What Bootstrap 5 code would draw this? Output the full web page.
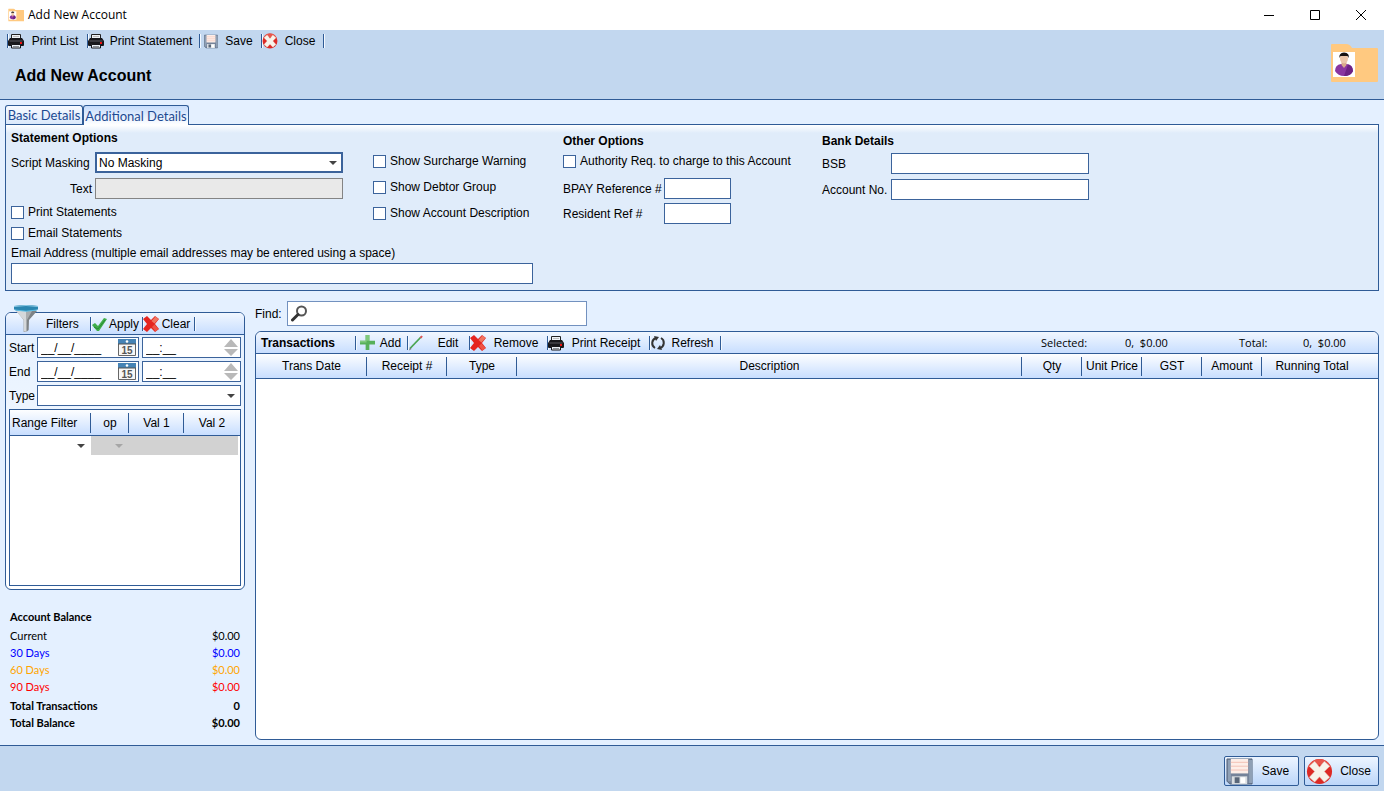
<!DOCTYPE html>
<html lang="en">
<head>
<meta charset="utf-8">
<meta name="viewport" content="width=device-width, initial-scale=1">
<title>Add New Account</title>
<link rel="stylesheet" href="https://cdn.jsdelivr.net/npm/bootstrap@5.3.0/dist/css/bootstrap.min.css">
<style>
  :root { --line: #2f5b96; --band: #c2d7ef; --pane: #e4f0ff; --tabpane: #e0ecfa; }
  body { font-family: "Liberation Sans", Arial, sans-serif; font-size: 12px; line-height: 16px; color: #000; background: var(--pane); }
  label, button, input, select, th { font-weight: 400; }
  svg { flex: none; display: block; }
  .titlebar { height: 30px; background: #fff; font-family: "Open Sans", sans-serif; padding-left: 8px; }
  .winbtn { width: 46px; height: 30px; border: 0; background: none; padding: 0; display: flex; align-items: center; justify-content: center; }
  .band { background: var(--band); }
  .head { height: 70px; border-bottom: 1px solid var(--line); padding: 0 6px 0 7px; }
  .head h1 { font-size: 16px; line-height: 20px; font-weight: 700; margin: 14px 0 0 8px; }
  .head-icon { margin-top: 13px; }

  .tbtn { border: 0; background: none; padding: 0; height: 22px; display: flex; align-items: center; color: #000; font-size: 12px; line-height: 16px; }
  .tbtn::before, .tail::before { content: ""; flex: none; width: 1px; height: 14px; background: var(--line); box-shadow: 1px 0 #f4f9ff; }
  .tail { height: 22px; display: flex; align-items: center; }
  .tbtn span { flex: 1; text-align: center; white-space: nowrap; padding-right: 1px; }
  .w52 { width: 52px; } .w62 { width: 62px; } .w71 { width: 71px; } .w78 { width: 78px; }
  .w80 { width: 80px; } .w102 { width: 102px; } .w112 { width: 112px; }

  .tabs { padding: 5px 5px 0; }
  .tabbtn { font-family: Lato, sans-serif; font-size: 13px; line-height: 16px; height: 19px; color: #1d4a92; border: 1px solid var(--line); border-bottom: 0; border-radius: 3px 3px 0 0; background: linear-gradient(#f7faff, #dbe9fb); padding: 0; text-align: center; }
  .tabbtn.on { background: linear-gradient(#c6dcfb, #fff); height: 20px; position: relative; margin-bottom: -1px; }
  .tab-a { width: 78px; } .tab-b { width: 106px; }
  .panel { margin: 0 5px; height: 167px; border: 1px solid var(--line); background: linear-gradient(#fff, var(--tabpane) 8px); padding: 4px 5px 0; }
  .panel h2 { font-size: 12px; line-height: 18px; font-weight: 700; margin: 0; }
  .fld { height: 21px; border: 1px solid #3b639b; border-radius: 0; background: #fff; padding: 0 3px; color: #000; font-size: 12px; outline: 0; min-width: 0; }
  .fld:disabled { background: #e9e9e9; border-color: #848484; opacity: 1; }
  select.fld { appearance: none; background: #fff url("data:image/svg+xml,%3Csvg xmlns='http://www.w3.org/2000/svg' width='8' height='4'%3E%3Cpath d='M0 0h8L4 4z' fill='%23444'/%3E%3C/svg%3E") no-repeat right 5px center; }
  select.thick { border-width: 2px; padding: 0 2px; background-position: right 4px center; }
  .tick { appearance: none; width: 13px; height: 13px; border: 1px solid #3b639b; background: #fff; margin: 0 4px 0 0; flex: none; }
  .ticks { display: flex; align-items: center; height: 16px; white-space: nowrap; }
  .col-st { width: 362px; } .col-wide { width: 552px; } .col-ot { width: 259px; padding-top: 3px; } .col-bk { width: 267px; padding-top: 3px; }
  .stack-st { display: flex; flex-direction: column; gap: 5px; }
  .stack-show { display: flex; flex-direction: column; gap: 10px; }
  .stack-bk { display: flex; flex-direction: column; gap: 5px; margin-top: 3px; }
  .w-mask { width: 248px; } .w-email { width: 522px; margin-top: 2px; } .w-ref { width: 67px; } .w-bank { width: 198px; }
  .lbl-ref { width: 101px; } .lbl-bank { width: 69px; } .lbl-mask { width: 84px; } .lbl-mask.text-end { padding-right: 3px; }
  .auth { margin: 3px 0 9px; }

  .lower { gap: 10px; padding: 10px 5px 5px; }
  .side { width: 240px; flex: none; }
  .box { border: 1px solid var(--line); border-radius: 6px; background: #fff; }
  .bar { height: 22px; border-bottom: 1px solid var(--line); border-radius: 5px 5px 0 0; background: linear-gradient(#f1f7ff, #c8deff); display: flex; align-items: center; }
  .filters { margin-top: 11px; height: 278px; background: linear-gradient(var(--pane), #fff); }
  .funnel { position: absolute; left: 7px; top: -8px; }
  .fname { width: 84px; padding-left: 40px; }
  .tname { width: 99px; padding-left: 5px; }
  .frows { padding: 2px 3px 0; }
  .frow { display: flex; align-items: center; height: 21px; margin-bottom: 3px; }
  .frow label { width: 28px; flex: none; }
  .combo { height: 21px; border: 1px solid #3b639b; background: #fff; display: flex; align-items: center; }
  .combo input { border: 0; outline: 0; padding: 0 0 0 3px; min-width: 0; flex: 1; height: 19px; font-size: 12px; background: none; }
  .combo button { border: 0; background: none; padding: 0 2px 0 0; }
  .w-date { width: 102px; margin-right: 3px; } .w-time { width: 99px; }
  .grid { width: 100%; table-layout: fixed; border-collapse: separate; border-spacing: 0; }
  .grid th { height: 25px; padding: 0; text-align: center; white-space: nowrap; border-bottom: 1px solid var(--line); position: relative; background: linear-gradient(#fdfeff, #c8deff); }
  .grid th:not(:last-child)::after { content: ""; position: absolute; right: 0; top: 3px; bottom: 2px; width: 1px; background: var(--line); box-shadow: 1px 0 #fff; }
  .range { margin: 0 3px 3px; flex: 1; border: 1px solid var(--line); background: #fff; }
  .range th { height: 26px; }
  .range th:first-child { text-align: left; padding-left: 2px; }
  .range td { height: 19px; padding: 0; }
  .range td.off { background: #d2d2d2; }
  .range td:last-child { border-right: 2px solid #fff; }
  .cell { appearance: none; border: 0; width: 100%; height: 19px; display: block; background: url("data:image/svg+xml,%3Csvg xmlns='http://www.w3.org/2000/svg' width='8' height='4'%3E%3Cpath d='M0 0h8L4 4z' fill='%23444'/%3E%3C/svg%3E") no-repeat right 6px center; }
  .cell:disabled { opacity: .3; }
  .r1 { width: 81px; } .r2 { width: 38px; } .r3 { width: 55px; }
  .c111 { width: 111px; } .c80 { width: 80px; } .c70 { width: 70px; } .c60 { width: 60px; } .c116 { width: 116px; }

  .bal { font-family: Lato, sans-serif; font-size: 11px; line-height: 17px; margin: 18px 5px 0; }
  .bal table { width: 100%; }
  .bal td, .bal th { padding: 0; }
  .bal td { text-align: right; }
  .bal .strong > * { font-weight: 700; }
  .bal .spaced > * { padding-top: 2px; }
  .d30 { color: #00f; } .d60 { color: orange; } .d90 { color: red; }
  .findrow { margin-bottom: 5px; }
  .lbl-find { width: 32px; }
  .find { height: 25px; width: 300px; border: 1px solid #7291bf; background: #fff; display: flex; align-items: center; padding-left: 3px; }
  .find input { border: 0; outline: 0; flex: 1; min-width: 0; background: none; }
  .trans { overflow: hidden; }
  .sums { font-family: "Open Sans", sans-serif; font-size: 11px; }
  .s1 { width: 84px; } .s2 { width: 114px; } .s3 { width: 64px; } .s4 { width: 75px; }
  .foot { height: 46px; border-top: 1px solid var(--line); padding: 10px 5px 0; gap: 5px; }
  .big { height: 30px; width: 75px; border: 1px solid var(--line); border-radius: 2px; background: linear-gradient(#edf5ff, #bcd6f9); display: flex; align-items: center; padding: 0 0 0 1px; color: #000; }
  .big span { flex: 1; text-align: center; }
</style>
</head>
<body>
<svg width="0" height="0" class="position-absolute" aria-hidden="true">
  <defs>
    <symbol id="printer" viewBox="0 0 16 16">
      <path d="M3.500 1.500h9v5h-9z" fill="#eef2f6" stroke="#222"/><path d="M5 3.500h6" stroke="#bbb"/>
      <path d="M2 5h12l2 3v4q0 1-1 1H1q-1 0-1-1V8z" fill="#17171b"/><path d="M1.500 8h13" stroke="#5a5a60"/><path d="M12 9h2v2h-2z" fill="#e11"/>
      <path d="M3.500 11.500h9v3.500h-9z" fill="#e8edf3" stroke="#17171b"/><path d="M5 13.500h6" stroke="#8a8f96"/>
    </symbol>
    <symbol id="disk" viewBox="0 0 28 28">
      <path d="M1 1h26v26H4l-3-3z" fill="#75839a" stroke="#56667c"/><path d="M2 2h3v22H2zM24 2h3v24h-3z" fill="#8fa0b5"/>
      <path d="M5 1h18v15H5z" fill="#fdeee8"/><path d="M5 4.500h18M5 8.500h18M5 12.500h18" stroke="#f2bfb4"/>
      <path d="M6 19h16v8H6z" fill="#d9dde1"/><path d="M9 20h5v6H9z" fill="#596678"/><path d="M15 20h5v6h-5z" fill="#fff"/>
    </symbol>
    <symbol id="stop" viewBox="0 0 28 28">
      <circle cx="14" cy="14" r="13" fill="#dd2a25"/><path d="M2 10a12.500 12.500 0 0 1 24 0c-8-4-16-4-24 0z" fill="#e8564c"/>
      <path d="M9 3.500l5 6 5-6 5.500 5-5.500 5.500 5.500 6-5.500 5-5-5.500-5 5.500-5.500-5L9 14 3.500 8.500z" fill="#f7f3ea" stroke="#e0d6cb" stroke-width=".5"/>
    </symbol>
    <symbol id="cross" viewBox="0 0 16 16">
      <path d="M0 3l4-3 4 4 4-4 4 3-4 5 4 5-4 3-4-4-4 4-4-3 4-5z" fill="#e5251f"/><path d="M8.500 5l4-4.500L15.500 3l-4 4.500z" fill="#f07561"/><path d="M9 11l2.500-2.500 4 4.500-3 2.500z" fill="#ee5345"/>
    </symbol>
    <symbol id="account" viewBox="0 0 48 40">
      <path d="M1 2q0-1 1-1h14q4 0 6 4h25q1 0 1 1v32q0 1-1 1H2q-1 0-1-1z" fill="#ffc980"/>
      <path d="M3 9h22v25H3z" fill="#fff"/><path d="M5 28q0-6 6-7h6q6 1 6 7-3 5-9 5t-9-5z" fill="#8a35a0"/><path d="M14 33c5 0 8-2 9-5-.5-4-2-6-5-6.500z" fill="#6d2284"/>
      <path d="M11.500 18h5v4L14 25l-2.500-3z" fill="#d9a98c"/><ellipse cx="14" cy="15.500" rx="4" ry="5" fill="#ecc6aa"/>
      <path d="M9.500 15q-1-5 4.500-5.500 6 .5 4.500 5.500l-1-2h-7z" fill="#171212"/>
    </symbol>
    <symbol id="calendar" viewBox="0 0 18 17">
      <path d="M.5.5h17v16H.5z" fill="#f7f7f7" stroke="#666"/><path d="M0 0h18v5H0z" fill="#4583b5"/><path d="M0 5h18" stroke="#555"/><circle cx="9" cy="2.500" r="1.300" fill="#fff"/>
      <text x="9" y="15" font-family="Liberation Sans" font-size="10" font-weight="700" text-anchor="middle" fill="#555">15</text>
    </symbol>
    <symbol id="spin" viewBox="0 0 14 17"><path d="M7 0l7 8H0zM7 17l7-7H0z" fill="#b9b9b9"/></symbol>
  </defs>
</svg>

<div class="d-flex flex-column min-vh-100">
  <header>
    <div class="titlebar d-flex align-items-center">
      <svg width="16" height="14"><use href="#account"/></svg>
      <span class="ps-1 me-auto">Add New Account</span>
      <button class="winbtn" aria-label="Minimize"><svg width="10" height="10"><path d="M0 5.500h10" stroke="#000"/></svg></button>
      <button class="winbtn" aria-label="Maximize"><svg width="10" height="10"><path d="M.5.5h9v9h-9z" fill="none" stroke="#000"/></svg></button>
      <button class="winbtn" aria-label="Close window"><svg width="10" height="10"><path d="M0 0l10 10M10 0L0 10" stroke="#000"/></svg></button>
    </div>
    <div class="band head d-flex justify-content-between">
      <div>
        <div class="d-flex">
          <button class="tbtn w80"><svg width="16" height="16"><use href="#printer"/></svg><span>Print List</span></button>
          <button class="tbtn w112"><svg width="16" height="16"><use href="#printer"/></svg><span>Print Statement</span></button>
          <button class="tbtn w62"><svg class="ms-1" width="14" height="15"><use href="#disk"/></svg><span>Save</span></button>
          <button class="tbtn w62"><svg width="16" height="16"><use href="#stop"/></svg><span>Close</span></button>
          <span class="tail"></span>
        </div>
        <h1>Add New Account</h1>
      </div>
      <svg class="head-icon" width="48" height="40"><use href="#account"/></svg>
    </div>
  </header>

  <main class="flex-grow-1 d-flex flex-column">
    <div class="tabs d-flex align-items-end" role="tablist">
      <button class="tabbtn tab-a" role="tab">Basic Details</button>
      <button class="tabbtn tab-b on" role="tab" aria-selected="true">Additional Details</button>
    </div>
    <section class="panel d-flex">
      <div class="col-wide">
        <div class="d-flex">
          <div class="col-st stack-st">
            <h2>Statement Options</h2>
            <div class="d-flex align-items-center">
              <label class="lbl-mask" for="mask">Script Masking</label>
              <select id="mask" class="fld thick w-mask"><option>No Masking</option></select>
            </div>
            <div class="d-flex align-items-center">
              <label class="lbl-mask text-end" for="masktext">Text</label>
              <input id="masktext" class="fld w-mask" disabled>
            </div>
            <label class="ticks"><input type="checkbox" class="tick">Print Statements</label>
            <label class="ticks"><input type="checkbox" class="tick">Email Statements</label>
          </div>
          <div class="stack-show pt-4">
            <label class="ticks"><input type="checkbox" class="tick">Show Surcharge Warning</label>
            <label class="ticks"><input type="checkbox" class="tick">Show Debtor Group</label>
            <label class="ticks"><input type="checkbox" class="tick">Show Account Description</label>
          </div>
        </div>
        <label for="email" class="d-block mt-1">Email Address (multiple email addresses may be entered using a space)</label>
        <input id="email" class="fld w-email d-block">
      </div>
      <div class="col-ot">
        <h2>Other Options</h2>
        <label class="ticks auth"><input type="checkbox" class="tick">Authority Req. to charge to this Account</label>
        <div class="d-flex align-items-center mb-1"><label class="lbl-ref" for="bpay">BPAY Reference #</label><input id="bpay" class="fld w-ref"></div>
        <div class="d-flex align-items-center"><label class="lbl-ref" for="resident">Resident Ref #</label><input id="resident" class="fld w-ref"></div>
      </div>
      <div class="col-bk">
        <h2>Bank Details</h2>
        <div class="stack-bk">
          <div class="d-flex align-items-center"><label class="lbl-bank" for="bsb">BSB</label><input id="bsb" class="fld w-bank"></div>
          <div class="d-flex align-items-center"><label class="lbl-bank" for="accno">Account No.</label><input id="accno" class="fld w-bank"></div>
        </div>
      </div>
    </section>

    <div class="lower d-flex flex-grow-1">
      <aside class="side">
        <section class="box filters position-relative d-flex flex-column">
          <svg class="funnel" width="26" height="27" viewBox="0 0 26 27">
            <path d="M1 3h24L15.500 15v10q-1 2-5 2V15z" fill="#a9adaf"/><path d="M3 6l8 9v11l2 .5V6z" fill="#d5d8da"/><path d="M16 15l8-9h-5l-5 9v11l1.500-1z" fill="#7e8386"/><path d="M1 1q12-2 24 0v3.500q-12 3-24 0z" fill="#2a86b0"/><path d="M1 1.500q12-2 24 0" stroke="#8cc9e4" fill="none"/><path d="M2 5q11 2.500 22 0" stroke="#5cc0e8" fill="none"/>
          </svg>
          <div class="bar">
            <span class="fname">Filters</span>
            <button class="tbtn w52"><svg width="16" height="16" viewBox="0 0 16 16"><path d="M1 9l3-2 3 3 6-8 3 1-8 12-2 0z" fill="#3fae49"/><path d="M3 11l4 2 7-9" stroke="#2a8636" fill="none"/></svg><span>Apply</span></button>
            <button class="tbtn w52"><svg width="16" height="16"><use href="#cross"/></svg><span>Clear</span></button>
            <span class="tail"></span>
          </div>
          <div class="frows">
            <div class="frow">
              <label for="sd">Start</label>
              <div class="combo w-date"><input id="sd" value="__/__/____"><button aria-label="Pick start date"><svg width="18" height="17"><use href="#calendar"/></svg></button></div>
              <div class="combo w-time"><input aria-label="Start time" value="__:__"><button aria-label="Step start time"><svg width="14" height="17"><use href="#spin"/></svg></button></div>
            </div>
            <div class="frow">
              <label for="ed">End</label>
              <div class="combo w-date"><input id="ed" value="__/__/____"><button aria-label="Pick end date"><svg width="18" height="17"><use href="#calendar"/></svg></button></div>
              <div class="combo w-time"><input aria-label="End time" value="__:__"><button aria-label="Step end time"><svg width="14" height="17"><use href="#spin"/></svg></button></div>
            </div>
            <div class="frow">
              <label for="ty">Type</label>
              <select id="ty" class="fld flex-grow-1"><option></option></select>
            </div>
          </div>
          <div class="range">
            <table class="grid">
              <colgroup><col class="r1"><col class="r2"><col class="r3"><col></colgroup>
              <thead><tr><th>Range Filter</th><th>op</th><th>Val 1</th><th>Val 2</th></tr></thead>
              <tbody><tr><td><select class="cell" aria-label="Range filter"><option></option></select></td><td class="off"><select class="cell" aria-label="Operator" disabled><option></option></select></td><td class="off"></td><td class="off"></td></tr></tbody>
            </table>
          </div>
        </section>
        <section class="bal">
          <table>
            <tr class="strong"><th colspan="2">Account Balance</th></tr>
            <tr class="spaced"><th>Current</th><td>$0.00</td></tr>
            <tr class="d30"><th>30 Days</th><td>$0.00</td></tr>
            <tr class="d60"><th>60 Days</th><td>$0.00</td></tr>
            <tr class="d90"><th>90 Days</th><td>$0.00</td></tr>
            <tr class="strong spaced"><th>Total Transactions</th><td>0</td></tr>
            <tr class="strong"><th>Total Balance</th><td>$0.00</td></tr>
          </table>
        </section>
      </aside>

      <div class="flex-grow-1 d-flex flex-column">
        <div class="findrow d-flex align-items-center">
          <label class="lbl-find" for="find">Find:</label>
          <div class="find">
            <svg width="17" height="17" viewBox="0 0 17 17"><circle cx="10.500" cy="6" r="4.500" fill="none" stroke="#555" stroke-width="2"/><path d="M7 9.500l-5.500 5.500" stroke="#333" stroke-width="3" stroke-linecap="round"/></svg>
            <input id="find">
          </div>
        </div>
        <section class="box trans flex-grow-1">
          <div class="bar">
            <b class="tname">Transactions</b>
            <button class="tbtn w52"><svg class="ms-1" width="15" height="15" viewBox="0 0 16 16"><path d="M6 0h4v6h6v4h-6v6H6v-6H0V6h6z" fill="#57b05a"/><path d="M6 0h4v6H6zM0 6h7v2H0z" fill="#80c97c"/></svg><span>Add</span></button>
            <button class="tbtn w62"><svg width="16" height="16" viewBox="0 0 16 16"><path d="M2 13.500L13 2" stroke="#4aa552" stroke-width="1.800"/><path d="M1 15.500l1-3 1.500 1.500z" fill="#777"/><path d="M12.500 3L14 1" stroke="#d55" stroke-width="2"/></svg><span class="ps-1">Edit</span></button>
            <button class="tbtn w78"><svg width="16" height="16"><use href="#cross"/></svg><span>Remove</span></button>
            <button class="tbtn w102"><svg width="16" height="16"><use href="#printer"/></svg><span>Print Receipt</span></button>
            <button class="tbtn w71"><svg width="16" height="16" viewBox="0 0 16 16"><path d="M5 13a5.500 5.500 0 0 1 1-10M11 3a5.500 5.500 0 0 1-1 10" fill="none" stroke="#333" stroke-width="2"/><path d="M4 1l5 1-3 4zM12 15l-5-1 3-4z" fill="#333"/></svg><span>Refresh</span></button>
            <span class="tail me-auto"></span>
            <div class="sums d-flex"><span class="s1">Selected:</span><span class="s2">0,&nbsp; $0.00</span><span class="s3">Total:</span><span class="s4">0,&nbsp; $0.00</span></div>
          </div>
          <table class="grid">
            <colgroup><col class="c111"><col class="c80"><col class="c70"><col><col class="c60"><col class="c60"><col class="c60"><col class="c60"><col class="c116"></colgroup>
            <thead><tr><th>Trans Date</th><th>Receipt #</th><th>Type</th><th>Description</th><th>Qty</th><th>Unit Price</th><th>GST</th><th>Amount</th><th class="pe-3">Running Total</th></tr></thead>
          </table>
        </section>
      </div>
    </div>
  </main>

  <footer class="band foot d-flex justify-content-end">
    <button class="big"><svg width="27" height="27"><use href="#disk"/></svg><span>Save</span></button>
    <button class="big"><svg width="27" height="27"><use href="#stop"/></svg><span>Close</span></button>
  </footer>
</div>
<script src="https://cdn.jsdelivr.net/npm/bootstrap@5.3.0/dist/js/bootstrap.bundle.min.js"></script>
</body>
</html>
